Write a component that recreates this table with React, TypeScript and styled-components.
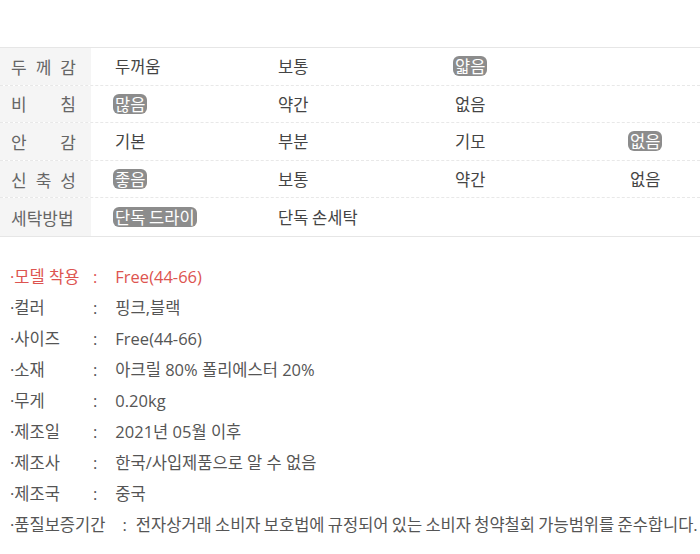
import React from "react";
import styled, { createGlobalStyle } from "styled-components";

const Global = createGlobalStyle`
  html, body { margin: 0; padding: 0; background: #fff; }
  body { font-family: "Open Sans", "Noto Sans CJK KR", sans-serif; color: #555; }
`;

const Page = styled.div`
  width: 700px;
  padding-top: 47px;
`;

const Table = styled.div`
  border-top: 1px solid #e6e6e6;
  border-bottom: 1px solid #e6e6e6;
`;

const Row = styled.div<{ $last?: boolean }>`
  display: grid;
  grid-template-columns: 91px 163px 177px 175px 1fr;
  height: 37.6px;
  align-items: stretch;
  border-bottom: ${(p) => (p.$last ? "none" : "1px dashed #e8e8e8")};
  box-sizing: border-box;
`;

const Label = styled.div`
  background: #f5f5f5;
  display: flex;
  align-items: center;
  justify-content: space-between;
  padding: 0 15px 0 11px;
  font-family: "Noto Sans CJK KR", sans-serif;
  font-size: 17px;
  color: #666;
`;

const Cell = styled.div`
  display: flex;
  align-items: center;
  padding-left: 24px;
  font-family: "Noto Sans CJK KR", sans-serif;
  font-size: 16.5px;
  color: #444;
`;

const Badge = styled.span`
  background: #8c8c8c;
  color: #fff;
  border-radius: 6px;
  padding: 0 2px;
  margin-left: -2px;
  line-height: 20px;
`;

const InfoList = styled.ul`
  list-style: none;
  margin: 0;
  padding: 24px 0 0 10px;
`;

const InfoItem = styled.li<{ $red?: boolean; $long?: boolean }>`
  display: flex;
  align-items: center;
  height: 31px;
  font-size: 16.5px;
  color: ${(p) => (p.$red ? "#dd5450" : "#555")};
  white-space: nowrap;
  word-spacing: ${(p) => (p.$long ? "-1px" : "normal")};
`;

const InfoLabel = styled.span`
  min-width: 83px;
`;

const Colon = styled.span<{ $tight?: boolean }>`
  margin: 0 ${(p) => (p.$tight ? "9px" : "18px")} 0 ${(p) => (p.$tight ? "17px" : "0")};
`;

type V = { t: string; b?: boolean } | null;

const rows: { label: string[]; values: V[] }[] = [
  { label: ["두", "께", "감"], values: [{ t: "두꺼움" }, { t: "보통" }, { t: "얇음", b: true }, null] },
  { label: ["비", "침"], values: [{ t: "많음", b: true }, { t: "약간" }, { t: "없음" }, null] },
  { label: ["안", "감"], values: [{ t: "기본" }, { t: "부분" }, { t: "기모" }, { t: "없음", b: true }] },
  { label: ["신", "축", "성"], values: [{ t: "좋음", b: true }, { t: "보통" }, { t: "약간" }, { t: "없음" }] },
  { label: ["세탁방법"], values: [{ t: "단독 드라이", b: true }, { t: "단독 손세탁" }, null, null] },
];

const info: { label: string; value: string; red?: boolean }[] = [
  { label: "·모델 착용", value: "Free(44-66)", red: true },
  { label: "·컬러", value: "핑크,블랙" },
  { label: "·사이즈", value: "Free(44-66)" },
  { label: "·소재", value: "아크릴 80% 폴리에스터 20%" },
  { label: "·무게", value: "0.20kg" },
  { label: "·제조일", value: "2021년 05월 이후" },
  { label: "·제조사", value: "한국/사입제품으로 알 수 없음" },
  { label: "·제조국", value: "중국" },
];

export default function App() {
  return (
    <Page>
      <Global />
      <Table>
        {rows.map((r, i) => (
          <Row key={i} $last={i === rows.length - 1}>
            <Label>
              {r.label.map((c, j) => (
                <span key={j}>{c}</span>
              ))}
            </Label>
            {r.values.map((v, j) => (
              <Cell key={j}>{v ? v.b ? <Badge>{v.t}</Badge> : v.t : null}</Cell>
            ))}
          </Row>
        ))}
      </Table>
      <InfoList>
        {info.map((it, i) => (
          <InfoItem key={i} $red={it.red}>
            <InfoLabel>{it.label}</InfoLabel>
            <Colon>:</Colon>
            <span>{it.value}</span>
          </InfoItem>
        ))}
        <InfoItem $long>
          <span>·품질보증기간</span>
          <Colon $tight>:</Colon>
          <span>전자상거래 소비자 보호법에 규정되어 있는 소비자 청약철회 가능범위를 준수합니다.</span>
        </InfoItem>
      </InfoList>
    </Page>
  );
}
